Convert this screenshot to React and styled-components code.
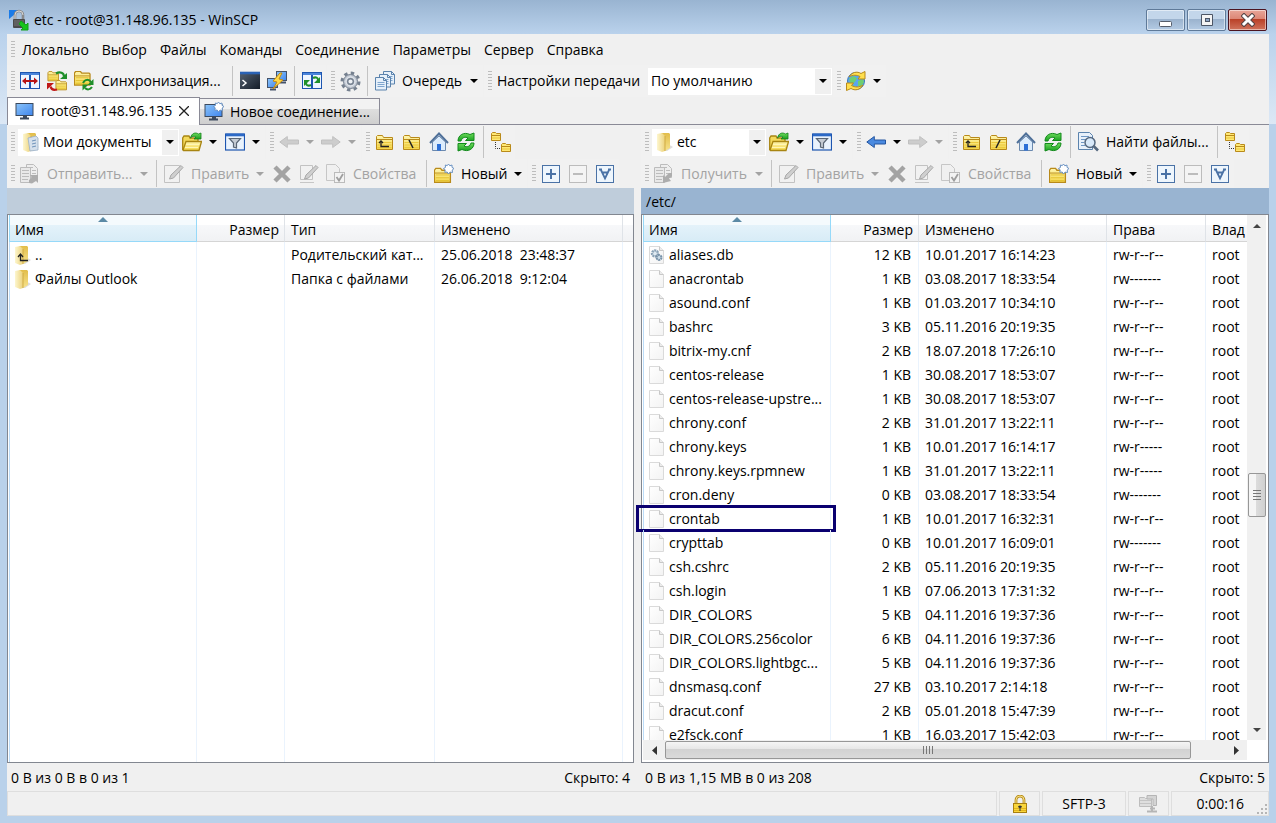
import React from "react";
import styled, { createGlobalStyle, css } from "styled-components";

const GlobalStyle = createGlobalStyle`
	* {
		box-sizing: border-box;
	}

	body {
		margin: 0;
		background: #b9d1ea;
	}

	body,
	button,
	select {
		font-family: "Open Sans", "Noto Sans", sans-serif;
		font-size: 14px;
		line-height: 20px;
		color: #000;
	}
`;

/* ---------- icons ---------- */

const Svg = ({ w = 20, h = 20, children }) => (
	<svg
		width={w}
		height={h}
		viewBox={`0 0 ${w} ${h}`}
		fill='none'
		aria-hidden='true'
	>
		{children}
	</svg>
);

const HiddenSvg = styled.svg`
	display: block;
`;

const Gradients = () => (
	<HiddenSvg width='0' height='0' aria-hidden='true'>
		<defs>
			<linearGradient id='gFolder' x1='0' y1='0' x2='0' y2='1'>
				<stop offset='0' stopColor='#fff6b0' />
				<stop offset='1' stopColor='#f3d548' />
			</linearGradient>
			<linearGradient id='gManila' x1='0' y1='0' x2='1' y2='0'>
				<stop offset='0' stopColor='#fdf6cf' />
				<stop offset='1' stopColor='#ecd27a' />
			</linearGradient>
			<linearGradient id='gManilaBack' x1='0' y1='0' x2='0' y2='1'>
				<stop offset='0' stopColor='#e2bd4a' />
				<stop offset='1' stopColor='#f7e38c' />
			</linearGradient>
			<linearGradient id='gScreen' x1='0' y1='0' x2='1' y2='1'>
				<stop offset='0' stopColor='#8cc4f8' />
				<stop offset='1' stopColor='#3f86ee' />
			</linearGradient>
			<linearGradient id='gGreen' x1='0' y1='0' x2='0' y2='1'>
				<stop offset='0' stopColor='#6fdc5c' />
				<stop offset='1' stopColor='#17a01f' />
			</linearGradient>
			<linearGradient id='gDark' x1='0' y1='0' x2='1' y2='1'>
				<stop offset='0' stopColor='#566372' />
				<stop offset='1' stopColor='#141c28' />
			</linearGradient>
			<linearGradient id='gPaper' x1='0' y1='0' x2='1' y2='1'>
				<stop offset='0' stopColor='#fff' />
				<stop offset='1' stopColor='#f3f3f3' />
			</linearGradient>
		</defs>
	</HiddenSvg>
);

const FolderShape = ({ x = 0, y = 0, s = 1 }) => (
	<g transform={`translate(${x} ${y}) scale(${s})`}>
		<path
			d='M1.5 17.5V4.5L3 2.5h5l1.5 2h8l1 1v12z'
			fill='url(#gFolder)'
			stroke='#b98a1a'
			strokeWidth='1.4'
		/>
		<path d='M2 7.5h16' stroke='#b98a1a' />
		<path d='M3 9.5h14M3 12.5h14M3 15.5h14' stroke='#e3c02e' />
	</g>
);

const TinyFolder = ({ x, y }) => (
	<g transform={`translate(${x} ${y})`}>
		<path d='M.5 8.5v-7l1-1h3l1 1h4v7z' fill='#ffe873' stroke='#b98a1a' />
		<path d='M1 3.5h8' stroke='#b98a1a' />
		<path d='M1 6h8' stroke='#e8c53a' />
	</g>
);

const AppIcon = () => (
	<Svg w={22} h={22}>
		<path d='M0 1h10L6 5 0 10z' fill='#1a7be8' />
		<path d='M6 11V6a4 4 0 0 1 8 0v5' stroke='#8a8a8a' strokeWidth='2.6' />
		<path d='M6 10V6a4 4 0 0 1 8 0' stroke='#d5d5d5' />
		<rect x='4' y='10' width='12' height='9' rx='1' fill='#4a4a4a' />
		<path d='M5 12h10M5 14h10M5 16h10' stroke='#777' />
		<path d='M12 12l5 4 2-2v7h-7l2-2-4-4z' fill='#18c41c' stroke='#12a018' />
	</Svg>
);

const PanesIcon = () => (
	<Svg>
		<rect x='.5' y='1.5' width='19' height='16' fill='#eef5ff' stroke='#1d55b0' />
		<path d='M1 3h18' stroke='#4a84da' strokeWidth='2' />
		<path d='M10 4v14' stroke='#1d55b0' strokeWidth='2' />
		<path d='M5 10h10' stroke='#b81414' strokeWidth='2' />
		<path d='M2 10l4-3.5v7zM18 10l-4-3.5v7z' fill='#b81414' />
	</Svg>
);

const SyncFoldersIcon = () => (
	<Svg>
		<FolderShape x={0} y={-1} s={0.62} />
		<FolderShape x={8} y={8} s={0.62} />
		<path d='M9 2.5c4-2.500 8-.5 8 3' stroke='#1f8f2a' strokeWidth='2.2' />
		<path d='M20 2v6h-7z' fill='#1f8f2a' />
		<path d='M10 18.500c-4 1-6-1-6.500-3' stroke='#c01818' strokeWidth='2.2' />
		<path d='M0 18.500v-6.500h7z' fill='#c01818' />
	</Svg>
);

const FolderSyncIcon = () => (
	<Svg>
		<FolderShape x={-1} y={-2} s={0.92} />
		<path d='M9 12c2-4 6-4 8-1' stroke='#1f8f2a' strokeWidth='2' />
		<path d='M19.5 8v6h-6z' fill='#1f8f2a' />
		<path d='M18 16c-2 3-5 3-7 1' stroke='#1f8f2a' strokeWidth='2' />
		<path d='M8.5 19.5v-6h6z' fill='#1f8f2a' />
	</Svg>
);

const ConsoleIcon = () => (
	<Svg>
		<rect y='1' width='20' height='17' fill='url(#gDark)' />
		<path d='M0 2h20' stroke='#2a62b4' strokeWidth='2.6' />
		<path d='M2.5 9l3.500 3-3.500 3' stroke='#fff' strokeWidth='1.5' />
	</Svg>
);

const PuttyIcon = () => (
	<Svg>
		<rect x='9.5' y='.5' width='10' height='9' fill='url(#gScreen)' stroke='#45536a' />
		<path d='M13 11.5h6' stroke='#45536a' strokeWidth='2' />
		<rect x='.5' y='7.5' width='10' height='9' fill='url(#gScreen)' stroke='#45536a' />
		<path d='M3 18.5h6' stroke='#45536a' strokeWidth='2' />
		<path d='M13 2L6 10l4 1-4 7 10-9-4-1 3-6z' fill='#ffd94a' stroke='#c48a10' />
	</Svg>
);

const PanesSyncIcon = () => (
	<Svg>
		<rect x='.5' y='1.5' width='19' height='16' fill='#eef5ff' stroke='#1d55b0' />
		<path d='M1 3h18' stroke='#4a84da' strokeWidth='2' />
		<path d='M10 4v14' stroke='#1d55b0' strokeWidth='2' />
		<path d='M11 7c3-1.500 5 0 5 2M9 14c-3 1.500-5 0-5-2' stroke='#1f8f2a' strokeWidth='2' />
		<path d='M18 6v6h-6zM2 15V9h6z' fill='#1f8f2a' />
	</Svg>
);

const GearIcon = () => (
	<Svg w={21} h={21}>
		<circle
			cx='10.5'
			cy='10.5'
			r='8.5'
			stroke='#75808f'
			strokeWidth='3'
			strokeDasharray='3.4 3.27'
		/>
		<circle cx='10.5' cy='10.5' r='7' fill='#c3cad4' stroke='#75808f' />
		<circle cx='10.5' cy='10.5' r='4.6' stroke='#e9edf2' />
		<circle
			cx='10.5'
			cy='10.5'
			r='2.8'
			fill='#eef1f5'
			stroke='#75808f'
			strokeWidth='1.4'
		/>
	</Svg>
);

const QueueIcon = () => (
	<Svg>
		{[
			[8, 0],
			[4, 3],
			[0, 6],
		].map(([x, y]) => (
			<g key={x} transform={`translate(${x} ${y})`}>
				<path d='M.5.5h8l3 3v9.5H.5z' fill='#e6f0fa' stroke='#5b83ad' />
				<path d='M8.5.5v3h3' stroke='#5b83ad' />
				<path d='M2.5 5.5h7M2.5 7.5h7M2.5 9.5h7' stroke='#7fa6cf' />
			</g>
		))}
	</Svg>
);

const GlobeIcon = () => (
	<Svg>
		<circle cx='10' cy='10' r='8.5' fill='#5aa5f0' stroke='#3a78b8' />
		<path
			d='M3 8l4-3 4 2-2 4-4 2zM12 10l5-2 1 3-3 5-3-1zM6 14l3 1v2z'
			fill='#6fcf72'
		/>
		<path
			d='M3 6C6 1 11 0 15 2.500l4-2V8h-7l2-2.500C11 4 7 3.500 3 6z'
			fill='#ffdf4e'
			stroke='#b98a1a'
		/>
		<path
			d='M17 14c-3 5-8 6-12 3.500L.5 19.500V12h7l-2 2.500C9 16.500 13 16.500 17 14z'
			fill='#ffdf4e'
			stroke='#b98a1a'
		/>
	</Svg>
);

const Star = ({ x, y }) => (
	<path
		transform={`translate(${x} ${y})`}
		d='M4.5 0l1.3 1.8 2.2-.8v2.4L10 4.500 8.200 6l.3 2.500-2.500-.4L4.500 10 3.200 8 .8 8.300l.4-2.500L-.5 4.500l2-1.100L1.300 1l2 .6z'
		fill='#fff'
		stroke='#6b93c4'
	/>
);

const MonitorIcon = ({ star }) => (
	<Svg>
		<rect x='1' y='2.5' width='17' height='12' fill='url(#gScreen)' stroke='#3c4a5e' />
		<path d='M8 15h4v2H8z' fill='#3c4a5e' />
		<path d='M5 17.5h9' stroke='#3c4a5e' strokeWidth='2' />
		{star && <Star x={10} y={0} />}
	</Svg>
);

const OpenFolderIcon = () => (
	<Svg>
		<path
			d='M.7 18V6l1.300-2h5l1 2h8v4'
			fill='#f3d95a'
			stroke='#a88512'
			strokeWidth='1.3'
		/>
		<path
			d='M1 18L4 9.5h15.500L17 18.500H1.500z'
			fill='url(#gFolder)'
			stroke='#a88512'
			strokeWidth='1.3'
		/>
		<path d='M4 12.500h13M3 15.500h13' stroke='#fff6b8' />
		<path
			d='M8.500 6c1-5 5-6 8-4l2.500-1v6h-7l2-2c-2-1-4-1-5.500 1z'
			fill='url(#gGreen)'
			stroke='#11801a'
			strokeWidth='.8'
		/>
	</Svg>
);

const FilterIcon = () => (
	<Svg>
		<rect x='.5' y='2' width='19' height='16' fill='#eaf3fd' stroke='#1d55b0' strokeWidth='1.2' />
		<path d='M1 3h18' stroke='#2c69c6' strokeWidth='2.6' />
		<path
			d='M4.5 6.5h11L11.500 11v5l-3-1v-4z'
			fill='#c6ccd4'
			stroke='#5a6675'
			strokeWidth='1.2'
		/>
	</Svg>
);

const ArrowIcon = ({ right, off }) => (
	<Svg>
		<path
			transform={right ? "matrix(-1 0 0 1 20 0)" : undefined}
			d='M.8 10l7.500-5.500V8H19.500v4H8.300v3.500z'
			fill={off ? "#cdcdcd" : "#4a8ae0"}
			stroke={off ? "#c0c0c0" : "#24559f"}
		/>
	</Svg>
);

const FolderMarkIcon = ({ children }) => (
	<Svg>
		<path d='M1.500 17.500v-13l1-1h5l1 2h9v12z' fill='url(#gFolder)' stroke='#b98a1a' />
		<path d='M2 7.500h15' stroke='#b98a1a' />
		<path d='M2.500 10.500h14M2.500 13h14M2.500 15.500h14' stroke='#ecc93c' />
		{children}
	</Svg>
);

const UpIcon = () => (
	<FolderMarkIcon>
		<path d='M6 9v5.500h8' stroke='#222' strokeWidth='1.3' />
		<path d='M4 11l2-2 2 2' stroke='#222' strokeWidth='1.3' />
	</FolderMarkIcon>
);

const RootIcon = ({ back }) => (
	<FolderMarkIcon>
		<path d={back ? "M7 8l4 8" : "M11 8l-4 8"} stroke='#222' strokeWidth='1.5' />
	</FolderMarkIcon>
);

const HomeIcon = () => (
	<Svg>
		<path d='M3.5 10v8.500h13V10L10 4z' fill='#dcecfc' stroke='#6b89ae' />
		<path d='M1 11l9-9.500L19 11' stroke='#4f7099' strokeWidth='2' />
		<rect x='8' y='12' width='4' height='6.5' fill='#2b6fd6' />
	</Svg>
);

const RefreshIcon = () => (
	<Svg>
		<path
			d='M2 9C2 3 8-.5 14 2.500L18 1v7.500H9.500L12 6C9 4.500 6 5.500 5 9z'
			fill='url(#gGreen)'
			stroke='#128a1c'
		/>
		<path
			d='M18 11c0 6-6 9.500-12 6.500L2 19v-7.500h8.500L8 14c3 1.500 6 .5 7-3z'
			fill='url(#gGreen)'
			stroke='#128a1c'
		/>
	</Svg>
);

const TreeIcon = () => (
	<Svg>
		<TinyFolder x={0} y={0} />
		<TinyFolder x={10} y={11} />
		<path d='M4.500 10v6.500H10' stroke='#333' strokeDasharray='1 1' />
	</Svg>
);

const FindIcon = () => (
	<Svg w={21}>
		<path d='M.5.5h11l3 3v14H.5z' fill='#e8f1fb' stroke='#5b83ad' />
		<path d='M3 4.5h8M3 7.5h5M3 10.5h3M3 13.5h4' stroke='#6f97c4' />
		<circle cx='12' cy='10.5' r='5' fill='#d8e9fa' stroke='#55687f' strokeWidth='1.5' />
		<path d='M15.500 14l4.500 4.500' stroke='#55687f' strokeWidth='2.6' />
	</Svg>
);

const SendIcon = ({ down }) => (
	<Svg>
		<path d='M6.5.5h7l4 4v9h-11z' fill='#eee' stroke='#bcbcbc' />
		<path d='M.5 3.5h10v15H.5z' fill='#e9e9e9' stroke='#bcbcbc' />
		<path
			d='M2 6.5h7M2 9.5h7M2 12.5h7M2 15.5h6M8 3.5h5M12 6.5h4M12 9.5h4'
			stroke='#bcbcbc'
		/>
		{down ? (
			<path d='M18 9v3l-3 2.500 2 2.500-8 2v-8l2 2 4-4z' fill='#adadad' />
		) : (
			<path d='M9 19v-3l3-2.500-2-2.500h8v8l-2-2-4 2.500z' fill='#adadad' />
		)}
	</Svg>
);

const EditIcon = ({ small }) => (
	<Svg>
		<path
			d={small ? "M1.5 1.5h12v14h-12z" : "M.5 1.5h15v17H.5z"}
			fill='#f1f1f1'
			stroke='#c2c2c2'
		/>
		{small && <path d='M1 18.5h14' stroke='#c6c6c6' />}
		<path d='M5.500 15l1.500-4L17 1.500l2 2L9.500 14z' fill='#cfcfcf' stroke='#a8a8a8' />
	</Svg>
);

const DeleteIcon = () => (
	<Svg>
		<path d='M3 3l14 14M17 3L3 17' stroke='#a3a3a3' strokeWidth='4.5' />
	</Svg>
);

const PropsIcon = () => (
	<Svg>
		<path d='M.5.5h9l4 4v12H.500z' fill='#f0f0f0' stroke='#c6c6c6' />
		<rect x='8.5' y='8.5' width='10' height='10' fill='#f3f3f3' stroke='#bbb' />
		<path d='M10.500 13l2.500 3.500 4-6.500' stroke='#9e9e9e' strokeWidth='1.8' />
	</Svg>
);

const NewFolderIcon = () => (
	<Svg>
		<FolderShape x={-1} y={2} s={0.94} />
		<Star x={10} y={0} />
	</Svg>
);

const BoxIcon = ({ mark, off }) => {
	const color = off ? "#bcbcbc" : "#4a72a6";
	return (
		<Svg>
			<rect
				x='1.5'
				y='1.5'
				width='17'
				height='17'
				fill={off ? "#f4f4f4" : "#eef6fd"}
				stroke={color}
			/>
			{mark !== "v" && <path d='M5 10h10' stroke={color} strokeWidth='2' />}
			{mark === "+" && <path d='M10 5v10' stroke={color} strokeWidth='2' />}
			{mark === "v" && (
				<path
					d='M5.500 5L10 14.500 14.500 5M4 5.500h3M13 5.500h3M7 8.500h6'
					stroke={color}
					strokeWidth='1.8'
				/>
			)}
		</Svg>
	);
};

const ManilaIcon = ({ up, doc }) => (
	<Svg w={16} h={19}>
		<path d='M9 10l7 4-6 4H6z' fill='#cfcfcf' opacity='.7' />
		<path d='M4 0h8l1 1v14l-5 3z' fill='url(#gManilaBack)' />
		<path d='M0 1l5-1 3 3v15l-3 1-5-2z' fill='url(#gManila)' />
		<path d='M8 3v15' stroke='#c9a23a' strokeWidth='.8' />
		{doc && (
			<>
				<path d='M5 5l8-2 2 2v12l-8 1z' fill='#d5e0ec' stroke='#9bb0c6' strokeWidth='.8' />
				<path d='M9 8l4-1M9 11l4-1M9 14l4-1' stroke='#6f93ba' />
			</>
		)}
		{up && (
			<path d='M5.500 8v6.500H13M3 11l2.500-3L8 11' stroke='#222' strokeWidth='1.3' />
		)}
	</Svg>
);

const FileIcon = ({ gear }) => (
	<Svg w={16} h={18}>
		<path d='M.5.5h10l4 4v13H.5z' fill='url(#gPaper)' stroke='#dadada' />
		<path d='M10.500.5v4h4' fill='#ececec' stroke='#c8c8c8' />
		{gear && (
			<>
				<circle
					cx='6'
					cy='7.5'
					r='3'
					fill='#dfeaf2'
					stroke='#8aa2b6'
					strokeDasharray='2 .6'
					strokeWidth='2.4'
				/>
				<circle
					cx='10'
					cy='11.5'
					r='2.5'
					fill='#c9dae6'
					stroke='#7791a8'
					strokeDasharray='2 .6'
					strokeWidth='2'
				/>
			</>
		)}
	</Svg>
);

const LockIcon = () => (
	<Svg w={14} h={18}>
		<path d='M3 9V5a4 4 0 0 1 8 0v4' stroke='#b98f1c' strokeWidth='2.8' />
		<path d='M3 9V5a4 4 0 0 1 8 0v4' stroke='#f6df86' />
		<rect x='.5' y='8.5' width='13' height='9' fill='#f9d63c' stroke='#a87f10' />
		<path d='M1 13.5h12M1 15.5h12' stroke='#e2b41c' />
		<path d='M5 12a2 1.500 0 0 1 4 0l-1.500 1v3h-1v-3z' fill='#333' />
	</Svg>
);

const CompressIcon = () => (
	<Svg w={19} h={18}>
		<path d='M.5 2.500h5l1 1h6v8H.5z' fill='#dedede' stroke='#bdbdbd' />
		<path d='M1 5.500h11M1 8.500h11' stroke='#c4c4c4' />
		<path d='M8 .5h9.500v10H14V4H8z' fill='#d4d4d4' stroke='#b5b5b5' />
		<path d='M13 11v5M8 16.500h10M11 13.500h5' stroke='#b5b5b5' strokeWidth='2' />
	</Svg>
);

/* ---------- toolbar parts ---------- */

const Grip = styled.span`
	flex: none;
	width: 4px;
	height: ${(props) => (props.$short ? "17px" : "20px")};
	margin: 0 2px 0 4px;
	background: repeating-linear-gradient(#bdbdbd 0 1px, transparent 1px 3px);
`;

const Separator = styled.span`
	flex: none;
	width: 1px;
	align-self: stretch;
	margin: 1px 4px 1px 3px;
	background: #c3c3c3;
`;

const Caret = styled.span`
	flex: none;
	margin-left: auto;
	border: solid transparent;
	border-width: 4px 4px 0;
	border-top-color: currentColor;
`;

const ToolButton = styled.button`
	flex: none;
	display: flex;
	align-items: center;
	gap: 7px;
	width: ${(props) => props.$width || 27}px;
	height: 28px;
	padding: 0 5px 0 3px;
	border: 0;
	background: none;
	white-space: nowrap;

	svg {
		flex: none;
	}

	&:disabled {
		color: #a3a3a3;
	}
`;

const Group = styled.div`
	display: flex;
	align-items: center;
	align-self: stretch;
	margin-right: 1px;
	background: #f1f1f1;
`;

const Bar = styled.div`
	display: flex;
	align-items: center;
	height: ${(props) => props.$height}px;
	overflow: hidden;
`;

const ComboBox = styled.span`
	flex: none;
	display: flex;
	align-items: center;
	width: ${(props) => props.$width}px;
	height: 27px;
	margin-left: 1px;
	padding-left: 2px;
	border: 1px solid #fff;
	background: #fff;

	svg {
		flex: none;
		margin: 0 4px 0 2px;
	}

	select {
		flex: 1;
		min-width: 0;
		height: 24px;
		padding: 0;
		border: 0;
		background: #fff;
		appearance: none;
	}
`;

const ComboArrow = styled.span`
	flex: none;
	display: flex;
	align-items: center;
	justify-content: center;
	width: 16px;
	height: 25px;
	background: #f0f0f0;

	${Caret} {
		margin: 0;
	}
`;

const Combo = ({ id, label, icon, value, width }) => (
	<ComboBox $width={width}>
		{icon}
		<select id={id} aria-label={label} defaultValue={value}>
			<option>{value}</option>
		</select>
		<ComboArrow>
			<Caret />
		</ComboArrow>
	</ComboBox>
);

const Tool = ({ icon, label, text, width, caret, off }) => (
	<ToolButton $width={width} disabled={off} aria-label={text ? undefined : label}>
		{icon}
		{text}
		{caret && <Caret />}
	</ToolButton>
);

/* ---------- window frame ---------- */

const Window = styled.div`
	display: flex;
	flex-direction: column;
	height: 100vh;
	padding: 0 7px 7px;
	background:
		linear-gradient(#99b4d1, #bad2ec) 0 0 / 100% 34px no-repeat,
		linear-gradient(#bad2ec, #dce8f5) 0 34px / 100% 90px no-repeat,
		#b9d1ea;
`;

const TitleBar = styled.header`
	flex: none;
	display: flex;
	align-items: center;
	gap: 3px;
	height: 34px;
	padding: 6px 2px 0;
`;

const Title = styled.h1`
	flex: 1;
	margin: 0;
	font-size: 14px;
	font-weight: 400;
`;

const WindowButtons = styled.div`
	display: flex;
	gap: 2px;
`;

const WindowButton = styled.button`
	display: flex;
	align-items: center;
	justify-content: center;
	width: 39px;
	height: 22px;
	padding: 0;
	border: 1px solid #5f7a99;
	border-radius: 2px;
	box-shadow: inset 0 0 0 1px rgba(255, 255, 255, 0.5);
	background: linear-gradient(#c3d6ea 0 45%, #9ab2cd 45%, #b4cbe4);

	${(props) =>
		props.$close &&
		css`
			border-color: #4b1420;
			background: linear-gradient(#e8a598, #dc8675 45%, #b93f26 45%, #d0735c);
		`}
`;

const Client = styled.div`
	flex: 1;
	min-height: 0;
	display: flex;
	flex-direction: column;
	background: #f0f0f0;
`;

const MenuBar = styled.nav`
	flex: none;
	display: flex;
	align-items: center;
	height: 31px;

	button {
		margin-right: 3px;
		padding: 0 5px;
		border: 0;
		background: none;
	}
`;

const TransferLabel = styled.label`
	flex: none;
	width: 153px;
	padding-left: 3px;
	white-space: nowrap;
`;

const TabBar = styled.div`
	flex: none;
	display: flex;
	align-items: flex-end;
	height: 28px;
	border-bottom: 1px solid #8a8a96;
`;

const Tab = styled.button`
	display: flex;
	align-items: center;
	gap: 6px;
	width: ${(props) => props.$width}px;
	height: 26px;
	padding: 0 5px 0 4px;
	border: 1px solid #8a8a96;
	border-width: 1px 1px 0 0;
	background: linear-gradient(#f2f2f2 0 40%, #dedede 40%, #cfcfcf);
	white-space: nowrap;

	${(props) =>
		props.$active &&
		css`
			height: 28px;
			margin-bottom: -1px;
			padding: 0 10px 2px 7px;
			border-left-width: 1px;
			background: #fff;
		`}

	svg {
		flex: none;
	}
`;

const TabClose = styled.span`
	display: flex;
	margin-left: auto;
`;

/* ---------- file panes ---------- */

const Panes = styled.main`
	flex: 1;
	min-height: 0;
	display: grid;
	grid-template-columns: 627fr 628fr;
	gap: 7px;
`;

const Pane = styled.section`
	display: flex;
	flex-direction: column;
	min-width: 0;
	min-height: 0;
`;

const PathBar = styled.div`
	flex: none;
	height: 26px;
	padding: 4px 5px;
	background: ${(props) => (props.$active ? "#99b4d1" : "#bfcddb")};
`;

const List = styled.div`
	flex: 1;
	min-height: 0;
	display: flex;
	flex-direction: column;
	padding: 0 0 0 1px;
	border: 1px solid #828790;
	background: #fff;
`;

const ListMain = styled.div`
	flex: 1;
	min-height: 0;
	display: flex;
`;

//The row marker sticks out sideways, so only the vertical axis is clipped.
const TableClip = styled.div`
	flex: 1;
	min-width: 0;
	min-height: 0;
	overflow-x: visible;
	overflow-y: clip;
`;

const Table = styled.table`
	width: 100%;
	height: 100%;
	table-layout: fixed;
	border-spacing: 0;

	th,
	td {
		padding: 0 6px;
		font-weight: 400;
		text-align: left;
		white-space: nowrap;
	}

	th {
		position: relative;
		height: 27px;
		padding-top: 3px;
		overflow: hidden;
		border-right: 1px solid #dfe3e8;
		border-bottom: 1px solid #d5d5d5;
		background: linear-gradient(#fff 0 40%, #f7f8fa 40%, #f1f2f4);
	}

	th:first-child {
		padding-left: 5px;
		border: 1px solid #96d9f9;
		border-top: 0;
		background: linear-gradient(#f4fafd 0 40%, #e3f2fa 40%, #d8ecf6);
	}

	th:last-child,
	td:last-child {
		border-right: 0;
	}

	td {
		height: 24px;
		padding-top: 2px;
		border-right: 1px solid #eaf3fd;
	}

	td:first-child {
		position: relative;
		padding-right: 0;
		padding-left: 5px;
		border-left: 1px solid #bcdcf8;
	}

	tr:last-child td {
		height: auto;
		padding: 0;
	}

	td:nth-child(2) {
		padding-right: 7px;
		text-align: right;
	}

	th:nth-child(2) {
		padding-right: 5px;
		text-align: right;
	}
`;

const SortMark = styled.span`
	position: absolute;
	top: 2px;
	left: 50%;
	margin-left: -5px;
	border: solid transparent;
	border-width: 0 5px 5px;
	border-bottom-color: #5b8aa6;
`;

const FileName = styled.span`
	display: flex;
	align-items: center;
	gap: 4px;

	svg {
		flex: none;
	}
`;

const Moment = styled.td`
	white-space: pre !important;
`;

const Marker = styled.span`
	position: absolute;
	inset: -1px -6px -2px -8px;
	border: 3px solid #0a0070;
	pointer-events: none;
`;

const Counters = styled.div`
	flex: none;
	display: flex;
	justify-content: space-between;
	height: 28px;
	padding: 5px 4px 3px;
`;

const VScroll = styled.div`
	flex: none;
	display: flex;
	flex-direction: column;
	align-items: center;
	width: 19px;
	margin-right: 2px;
	padding: 2px 0;
	background: #f0f0f0;
`;

const HScroll = styled.div`
	flex: none;
	display: flex;
	align-items: center;
	height: 20px;
	margin: 0 21px 2px 0;
	background: #f0f0f0;
`;

const Track = styled.span`
	flex: ${(props) => props.$size};
`;

const Thumb = styled.span`
	display: flex;
	align-items: center;
	justify-content: center;
	border: 1px solid #979797;
	border-radius: 2px;

	${(props) =>
		props.$vertical
			? css`
					flex: none;
					width: 18px;
					height: 44px;
					background: linear-gradient(90deg, #f5f5f5 0 45%, #dcdcdc 45%, #d0d0d0);
				`
			: css`
					flex: 525;
					height: 18px;
					background: linear-gradient(#f5f5f5, #e6e6e6 45%, #d2d2d2 45%, #dadada);
				`}
`;

const ScrollArrow = styled.button`
	flex: none;
	display: flex;
	align-items: center;
	justify-content: center;
	width: ${(props) => (props.$wide ? 22 : 19)}px;
	height: 17px;
	padding: 0;
	border: 0;
	background: none;
`;

const StatusBar = styled.footer`
	flex: none;
	display: flex;
	gap: 2px;
	height: 25px;
`;

const StatusCell = styled.div`
	flex: ${(props) => (props.$width ? "none" : 1)};
	display: flex;
	align-items: center;
	justify-content: ${(props) => (props.$end ? "flex-end" : "center")};
	gap: 12px;
	width: ${(props) => props.$width}px;
	border: 1px solid #dedede;
`;

const Corner = styled.span`
	align-self: flex-end;
	display: flex;
`;

const SizeGrip = () => (
	<Svg w={12} h={12}>
		<path
			d='M9 1h2v2H9zM9 5h2v2H9zM9 9h2v2H9zM5 5h2v2H5zM5 9h2v2H5zM1 9h2v2H1z'
			fill='#b5b5b5'
		/>
	</Svg>
);

/* ---------- data ---------- */

const menu = [
	"Локально",
	"Выбор",
	"Файлы",
	"Команды",
	"Соединение",
	"Параметры",
	"Сервер",
	"Справка",
];

const localFiles = [
	["..", "", "Родительский кат...", "25.06.2018  23:48:37"],
	["Файлы Outlook", "", "Папка с файлами", "26.06.2018  9:12:04"],
];

const remoteFiles = [
	["aliases.db", "12 KB", "10.01.2017 16:14:23", "rw-r--r--"],
	["anacrontab", "1 KB", "03.08.2017 18:33:54", "rw-------"],
	["asound.conf", "1 KB", "01.03.2017 10:34:10", "rw-r--r--"],
	["bashrc", "3 KB", "05.11.2016 20:19:35", "rw-r--r--"],
	["bitrix-my.cnf", "2 KB", "18.07.2018 17:26:10", "rw-r--r--"],
	["centos-release", "1 KB", "30.08.2017 18:53:07", "rw-r--r--"],
	["centos-release-upstre...", "1 KB", "30.08.2017 18:53:07", "rw-r--r--"],
	["chrony.conf", "2 KB", "31.01.2017 13:22:11", "rw-r--r--"],
	["chrony.keys", "1 KB", "10.01.2017 16:14:17", "rw-r-----"],
	["chrony.keys.rpmnew", "1 KB", "31.01.2017 13:22:11", "rw-r-----"],
	["cron.deny", "0 KB", "03.08.2017 18:33:54", "rw-------"],
	["crontab", "1 KB", "10.01.2017 16:32:31", "rw-r--r--"],
	["crypttab", "0 KB", "10.01.2017 16:09:01", "rw-------"],
	["csh.cshrc", "2 KB", "05.11.2016 20:19:35", "rw-r--r--"],
	["csh.login", "1 KB", "07.06.2013 17:31:32", "rw-r--r--"],
	["DIR_COLORS", "5 KB", "04.11.2016 19:37:36", "rw-r--r--"],
	["DIR_COLORS.256color", "6 KB", "04.11.2016 19:37:36", "rw-r--r--"],
	["DIR_COLORS.lightbgc...", "5 KB", "04.11.2016 19:37:36", "rw-r--r--"],
	["dnsmasq.conf", "27 KB", "03.10.2017 2:14:18", "rw-r--r--"],
	["dracut.conf", "2 KB", "05.01.2018 15:47:39", "rw-r--r--"],
	["e2fsck.conf", "1 KB", "16.03.2017 15:42:03", "rw-r--r--"],
];

/* ---------- composed parts ---------- */

const FileTable = ({ label, columns, widths, children }) => (
	<Table aria-label={label}>
		<colgroup>
			{widths.map((width, i) => (
				<col key={i} width={width} />
			))}
		</colgroup>
		<thead>
			<tr>
				{columns.map((name, i) => (
					<th key={i} scope='col'>
						{name}
						{i === 0 && <SortMark />}
					</th>
				))}
			</tr>
		</thead>
		<tbody>
			{children}
			<tr>
				{columns.map((name, i) => (
					<td key={i} />
				))}
			</tr>
		</tbody>
	</Table>
);

const NavigationBar = ({ remote }) => (
	<Bar $height={34}>
		<Group>
			<Grip />
			<Combo
				label='Каталог'
				icon={<ManilaIcon doc={!remote} />}
				value={remote ? "etc" : "Мои документы"}
				width={remote ? 114 : 161}
			/>
			<Tool icon={<OpenFolderIcon />} label='Открыть каталог' width={43} caret />
			<Tool icon={<FilterIcon />} label='Фильтр' width={43} caret />
		</Group>
		<Group>
			<Grip />
			<Tool icon={<ArrowIcon off={!remote} />} label='Назад' width={42} caret off={!remote} />
			<Tool icon={<ArrowIcon right off />} label='Вперёд' width={43} caret off />
		</Group>
		<Group>
			<Grip />
			<Tool icon={<UpIcon />} label='Вверх' />
			<Tool icon={<RootIcon back={!remote} />} label='Корневой каталог' />
			<Tool icon={<HomeIcon />} label='Домой' />
			<Tool icon={<RefreshIcon />} label='Обновить' />
			<Separator />
			{remote && (
				<>
					<Tool icon={<FindIcon />} text='Найти файлы...' width={139} />
					<Separator />
				</>
			)}
			<Tool icon={<TreeIcon />} label='Дерево' />
		</Group>
	</Bar>
);

const ActionBar = ({ remote }) => (
	<Bar $height={29}>
		<Group>
			<Grip $short />
			<Tool
				icon={<SendIcon down={remote} />}
				text={remote ? "Получить" : "Отправить..."}
				width={remote ? 117 : 136}
				caret
				off
			/>
			<Separator />
			<Tool icon={<EditIcon />} text='Править' width={108} caret off />
			<Tool icon={<DeleteIcon />} label='Удалить' off />
			<Tool icon={<EditIcon small />} label='Переименовать' off />
			<Tool icon={<PropsIcon />} text='Свойства' width={100} off />
			<Separator />
			<Tool icon={<NewFolderIcon />} text='Новый' width={96} caret />
		</Group>
		<Group>
			<Grip $short />
			<Tool icon={<BoxIcon mark='+' />} label='Выделить' />
			<Tool icon={<BoxIcon mark='-' off />} label='Снять выделение' off />
			<Tool icon={<BoxIcon mark='v' />} label='Выделить всё' />
		</Group>
	</Bar>
);

const App = () => (
	<Window>
		<GlobalStyle />
		<TitleBar>
			<AppIcon />
			<Title>etc - root@31.148.96.135 - WinSCP</Title>
			<WindowButtons>
				<WindowButton aria-label='Свернуть'>
					<Svg w={14} h={14}>
						<rect x='.5' y='8.5' width='12' height='5' rx='1' fill='#fff' stroke='#555d6b' />
					</Svg>
				</WindowButton>
				<WindowButton aria-label='Развернуть'>
					<Svg w={14} h={14}>
						<path d='M1.5 1.5h11v11h-11z' fill='#f4f4f4' stroke='#4d5666' />
						<rect x='5.5' y='5.5' width='4' height='3' fill='#8fa6c6' stroke='#4d5666' />
					</Svg>
				</WindowButton>
				<WindowButton $close aria-label='Закрыть'>
					<Svg w={14} h={14}>
						<path d='M3 3l8 8M11 3l-8 8' stroke='#544' strokeWidth='5' strokeLinecap='square' />
						<path d='M3 3l8 8M11 3l-8 8' stroke='#fff' strokeWidth='3' strokeLinecap='square' />
					</Svg>
				</WindowButton>
			</WindowButtons>
		</TitleBar>

		<Client>
			<Gradients />
			<MenuBar>
				<Grip $short />
				{menu.map((item) => (
					<button key={item}>{item}</button>
				))}
			</MenuBar>

			<Bar $height={32}>
				<Group>
					<Grip />
					<Tool icon={<PanesIcon />} label='Сравнить каталоги' />
					<Tool icon={<SyncFoldersIcon />} label='Синхронизировать' />
					<Tool icon={<FolderSyncIcon />} text='Синхронизация...' width={158} />
					<Separator />
					<Tool icon={<ConsoleIcon />} label='Терминал' />
					<Tool icon={<PuttyIcon />} label='Открыть в PuTTY' />
					<Separator />
					<Tool icon={<PanesSyncIcon />} label='Синхронный просмотр' />
				</Group>
				<Group>
					<Grip />
					<Tool icon={<GearIcon />} label='Настройки' />
					<Separator />
					<Tool icon={<QueueIcon />} text='Очередь' width={111} caret />
				</Group>
				<Group>
					<Grip />
					<TransferLabel htmlFor='transfer'>Настройки передачи</TransferLabel>
					<Combo id='transfer' value='По умолчанию' width={184} />
				</Group>
				<Group>
					<Grip />
					<Tool icon={<GlobeIcon />} label='Обновления' width={43} caret />
				</Group>
			</Bar>

			<TabBar>
				<Tab $width={193} $active>
					<MonitorIcon />
					root@31.148.96.135
					<TabClose>
						<Svg w={10} h={10}>
							<path d='M0 0l10 10M10 0L0 10' stroke='#222' strokeWidth='1.3' />
						</Svg>
					</TabClose>
				</Tab>
				<Tab $width={180}>
					<MonitorIcon star />
					Новое соединение...
				</Tab>
			</TabBar>

			<Panes>
				<Pane>
					<NavigationBar />
					<ActionBar />
					<PathBar />
					<List>
						<ListMain>
							<TableClip>
								<FileTable
									label='Локальные файлы'
									columns={["Имя", "Размер", "Тип", "Изменено", ""]}
									widths={[188, 88, 150, 188, undefined]}
								>
									{localFiles.map(([name, size, type, date]) => (
										<tr key={name}>
											<td>
												<FileName>
													<ManilaIcon up={name === ".."} />
													{name}
												</FileName>
											</td>
											<td>{size}</td>
											<td>{type}</td>
											<Moment>{date}</Moment>
											<td />
										</tr>
									))}
								</FileTable>
							</TableClip>
						</ListMain>
					</List>
					<Counters>
						<span>0 B из 0 B в 0 из 1</span>
						<span>Скрыто: 4</span>
					</Counters>
				</Pane>

				<Pane>
					<NavigationBar remote />
					<ActionBar remote />
					<PathBar $active>/etc/</PathBar>
					<List>
						<ListMain>
							<TableClip>
								<FileTable
									label='Файлы на сервере'
									columns={["Имя", "Размер", "Изменено", "Права", "Влад"]}
									widths={[188, 88, 188, 99, undefined]}
								>
									{remoteFiles.map(([name, size, date, rights], i) => (
										<tr key={name}>
											<td>
												<FileName>
													<FileIcon gear={i === 0} />
													{name}
												</FileName>
												{name === "crontab" && <Marker />}
											</td>
											<td>{size}</td>
											<td>{date}</td>
											<td>{rights}</td>
											<td>root</td>
										</tr>
									))}
								</FileTable>
							</TableClip>
							<VScroll>
								<ScrollArrow aria-label='Вверх'>
									<Svg w={8} h={4}>
										<path d='M0 4l4-4 4 4z' fill='#444' />
									</Svg>
								</ScrollArrow>
								<Track $size={238} />
								<Thumb $vertical>
									<Svg w={8} h={10}>
										<path d='M0 .5h8M0 3.5h8M0 6.5h8M0 9.5h8' stroke='#777' />
									</Svg>
								</Thumb>
								<Track $size={204} />
								<ScrollArrow aria-label='Вниз'>
									<Svg w={8} h={4}>
										<path d='M0 0h8L4 4z' fill='#444' />
									</Svg>
								</ScrollArrow>
							</VScroll>
						</ListMain>
						<HScroll>
							<ScrollArrow $wide aria-label='Влево'>
								<Svg w={5} h={9}>
									<path d='M5 0v9L0 4.500z' fill='#333' />
								</Svg>
							</ScrollArrow>
							<Thumb>
								<Svg w={10} h={8}>
									<path d='M.5 0v8M3.500 0v8M6.500 0v8M9.500 0v8' stroke='#777' />
								</Svg>
							</Thumb>
							<Track $size={34} />
							<ScrollArrow $wide aria-label='Вправо'>
								<Svg w={5} h={9}>
									<path d='M0 0v9l5-4.500z' fill='#333' />
								</Svg>
							</ScrollArrow>
						</HScroll>
					</List>
					<Counters>
						<span>0 B из 1,15 MB в 0 из 208</span>
						<span>Скрыто: 5</span>
					</Counters>
				</Pane>
			</Panes>

			<StatusBar>
				<StatusCell />
				<StatusCell $width={41}>
					<LockIcon />
				</StatusCell>
				<StatusCell $width={84}>SFTP-3</StatusCell>
				<StatusCell $width={41}>
					<CompressIcon />
				</StatusCell>
				<StatusCell $width={98} $end>
					0:00:16
					<Corner>
						<SizeGrip />
					</Corner>
				</StatusCell>
			</StatusBar>
		</Client>
	</Window>
);

export default App;
